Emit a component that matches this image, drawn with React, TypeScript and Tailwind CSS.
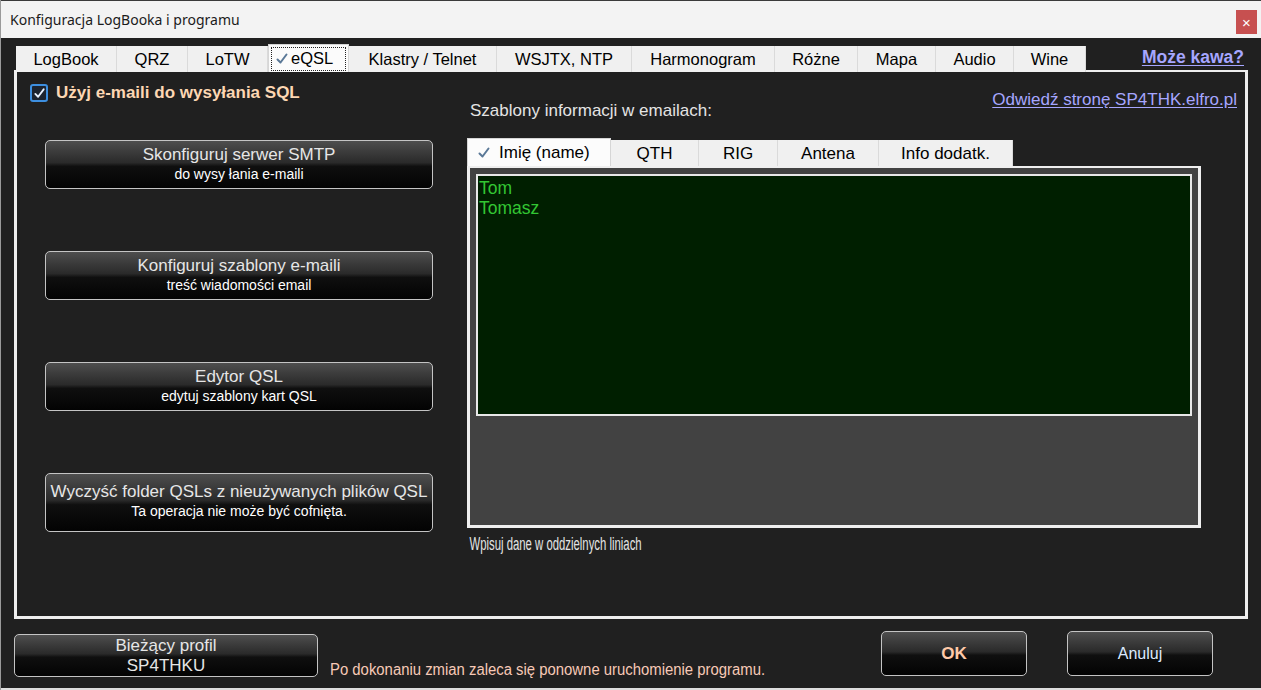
import React from "react";

function Check({ className }: { className?: string }) {
  return (
    <svg viewBox="0 0 14 14" className={className}>
      <path d="M2.5 7.5 L5.5 10.5 L11.5 2.5" fill="none" stroke="#5a7897" strokeWidth="2" strokeLinecap="round" strokeLinejoin="round" />
    </svg>
  );
}

function DarkButton({ className, children }: { className?: string; children: React.ReactNode }) {
  return (
    <div
      className={`flex flex-col items-center rounded-[5px] border border-[#c4c4c4] bg-[linear-gradient(to_bottom,#4e4e4e_0%,#3a3a3a_25%,#2a2a2a_46%,#0f0f0f_54%,#030303_100%)] ${className ?? ""}`}
    >
      {children}
    </div>
  );
}

const topTabs: [string, number][] = [
  ["LogBook", 101],
  ["QRZ", 71],
  ["LoTW", 80],
  ["eQSL", 81],
  ["Klastry / Telnet", 148],
  ["WSJTX, NTP", 135],
  ["Harmonogram", 143],
  ["Różne", 83],
  ["Mapa", 78],
  ["Audio", 78],
  ["Wine", 72],
];

const innerTabs: [string, number][] = [
  ["Imię (name)", 144],
  ["QTH", 88],
  ["RIG", 79],
  ["Antena", 101],
  ["Info dodatk.", 134],
];

export default function App() {
  return (
    <div className="w-[1261px] h-[690px] flex flex-col bg-[#202020] font-['Liberation_Sans',Arial,sans-serif] overflow-hidden border-l border-[#9a9a9a]">
      {/* title bar */}
      <div className="h-[38px] shrink-0 bg-[#f3f3f3] border-t border-[#3a3a3a] flex justify-between">
        <div className="pl-[9px] pt-[9px] text-[14px] leading-[20px] text-[#1b1b1b] font-['Noto_Sans',sans-serif]">
          Konfiguracja LogBooka i programu
        </div>
        <div className="mt-[9px] mr-[4px] w-[21px] h-[24px] bg-[#c75050] flex items-center justify-center text-white text-[15px] leading-none">
          ×
        </div>
      </div>

      {/* body */}
      <div className="flex-1 flex flex-col pt-[6px]">
        {/* tabs row */}
        <div className="relative z-10 flex items-end h-[28px] pl-[15px]">
          {topTabs.map(([t, w]) =>
            t === "eQSL" ? (
              <div key={t} className="h-[28px] bg-[#fbfbfb] border-x border-t border-[#d6d6d6] flex items-center justify-center px-[2px]" style={{ width: w }}>
                <div className="h-[24px] w-full border border-dotted border-[#222] flex items-center pl-[3px] gap-[2px] text-[16.5px] text-black">
                  <Check className="w-[14px] h-[14px]" />
                  <span>eQSL</span>
                </div>
              </div>
            ) : (
              <div key={t} className="h-[26px] pt-[1px] bg-[#f0f0f0] border-r border-[#dadada] flex items-center justify-center text-[16.5px] text-black" style={{ width: w }}>
                {t}
              </div>
            )
          )}
          <div className="ml-auto self-start mt-[0px] mr-[17px] text-[17.5px] font-bold text-[#a6a6ff] underline underline-offset-2">
            Może kawa?
          </div>
        </div>

        {/* main panel */}
        <div className="ml-[13px] w-[1234px] h-[549px] -mt-[2px] border-[3px] border-t-2 border-[#eeeeee] flex">
          {/* left column */}
          <div className="w-[450px] shrink-0 pl-[13px] pt-[12px] flex flex-col">
            <div className="flex items-center gap-[8px] h-[18px]">
              <div className="w-[18px] h-[18px] rounded-[3px] border-2 border-[#3d8fe0] bg-[#1c2430] flex items-center justify-center">
                <svg viewBox="0 0 14 14" className="w-[13px] h-[13px]">
                  <path d="M2.5 7.5 L5.5 10.5 L11.5 2.5" fill="none" stroke="#e9f2ff" strokeWidth="2" strokeLinecap="round" strokeLinejoin="round" />
                </svg>
              </div>
              <span className="text-[17px] font-bold text-[#fdd7b3]">Użyj e-maili do wysyłania SQL</span>
            </div>
            <div className="ml-[15px] mt-[38px] w-[388px] flex flex-col gap-[62px]">
              <DarkButton className="h-[49px] pt-[4px]">
                <span className="text-[17px] leading-[20px] text-[#e6e6e6]">Skonfiguruj serwer SMTP</span>
                <span className="text-[14px] leading-[18px] text-white">do wysy łania e-maili</span>
              </DarkButton>
              <DarkButton className="h-[49px] pt-[4px]">
                <span className="text-[17px] leading-[20px] text-[#e6e6e6]">Konfiguruj szablony e-maili</span>
                <span className="text-[14px] leading-[18px] text-white">treść wiadomości email</span>
              </DarkButton>
              <DarkButton className="h-[49px] pt-[4px]">
                <span className="text-[17px] leading-[20px] text-[#e6e6e6]">Edytor QSL</span>
                <span className="text-[14px] leading-[18px] text-white">edytuj szablony kart QSL</span>
              </DarkButton>
              <DarkButton className="h-[59px] pt-[8px]">
                <span className="text-[17px] leading-[20px] text-[#e6e6e6]">Wyczyść folder QSLs z nieużywanych plików QSL</span>
                <span className="text-[14px] leading-[18px] text-white">Ta operacja nie może być cofnięta.</span>
              </DarkButton>
            </div>
          </div>

          {/* right column */}
          <div className="flex-1 flex flex-col">
            <div className="flex justify-between items-start pr-[8px]">
              <span className="mt-[30px] pl-[3px] text-[17px] leading-[18px] text-[#e4e4e4]">Szablony informacji w emailach:</span>
              <span className="mt-[19px] text-[17px] leading-[18px] text-[#a6a6ff] underline underline-offset-2">Odwiedź stronę SP4THK.elfro.pl</span>
            </div>
            <div className="mt-[18px] h-[28px] flex items-end">
              {innerTabs.map(([t, w], i) =>
                i === 0 ? (
                  <div key={t} className="h-[28px] pt-[1px] bg-[#fcfcfc] border-x border-t border-[#d6d6d6] flex items-center pl-[9px] gap-[8px] text-[17px] text-black" style={{ width: w }}>
                    <Check className="w-[14px] h-[14px]" />
                    <span>{t}</span>
                  </div>
                ) : (
                  <div key={t} className="h-[26px] pt-[2px] bg-[#f0f0f0] border-r border-[#dadada] flex items-center justify-center text-[17px] text-black" style={{ width: w }}>
                    {t}
                  </div>
                )
              )}
            </div>
            <div className="w-[734px] h-[362px] border-[3px] border-t-2 border-[#efefef] bg-[#424242] pt-[6px] pl-[6px] pr-[6px]">
              <div className="h-[242px] border-2 border-[#e8e8e8] bg-[#001f00] pl-[1px] pt-[2px] text-[17.5px] leading-[20px] text-[#33c633]">
                <div>Tom</div>
                <div>Tomasz</div>
              </div>
            </div>
            <div className="mt-[7px] pl-[4px] h-[18px] text-[18px] leading-[18px] text-[#e4e4e4] origin-left scale-x-[0.63] whitespace-nowrap">
              Wpisuj dane w oddzielnych liniach
            </div>
          </div>
        </div>

        {/* bottom bar */}
        <div className="flex-1 flex items-start pl-[13px] border-b-2 border-[#dedede]">
          <DarkButton className="mt-[15px] w-[304px] h-[43px] pt-[1px]">
            <span className="text-[17px] leading-[20px] text-[#e6e6e6]">Bieżący profil</span>
            <span className="text-[17px] leading-[20px] text-[#e6e6e6]">SP4THKU</span>
          </DarkButton>
          <span className="mt-[42px] ml-[12px] text-[16px] leading-[18px] text-[#f7c9b6] whitespace-nowrap origin-left scale-x-[0.93]">
            Po dokonaniu zmian zaleca się ponowne uruchomienie programu.
          </span>
          <DarkButton className="ml-auto mt-[12px] w-[146px] h-[45px] justify-center">
            <span className="text-[17px] font-bold text-[#ffc9a8]">OK</span>
          </DarkButton>
          <DarkButton className="ml-[40px] mr-[48px] mt-[12px] w-[146px] h-[45px] justify-center">
            <span className="text-[16px] text-[#dceaff]">Anuluj</span>
          </DarkButton>
        </div>
      </div>
    </div>
  );
}
